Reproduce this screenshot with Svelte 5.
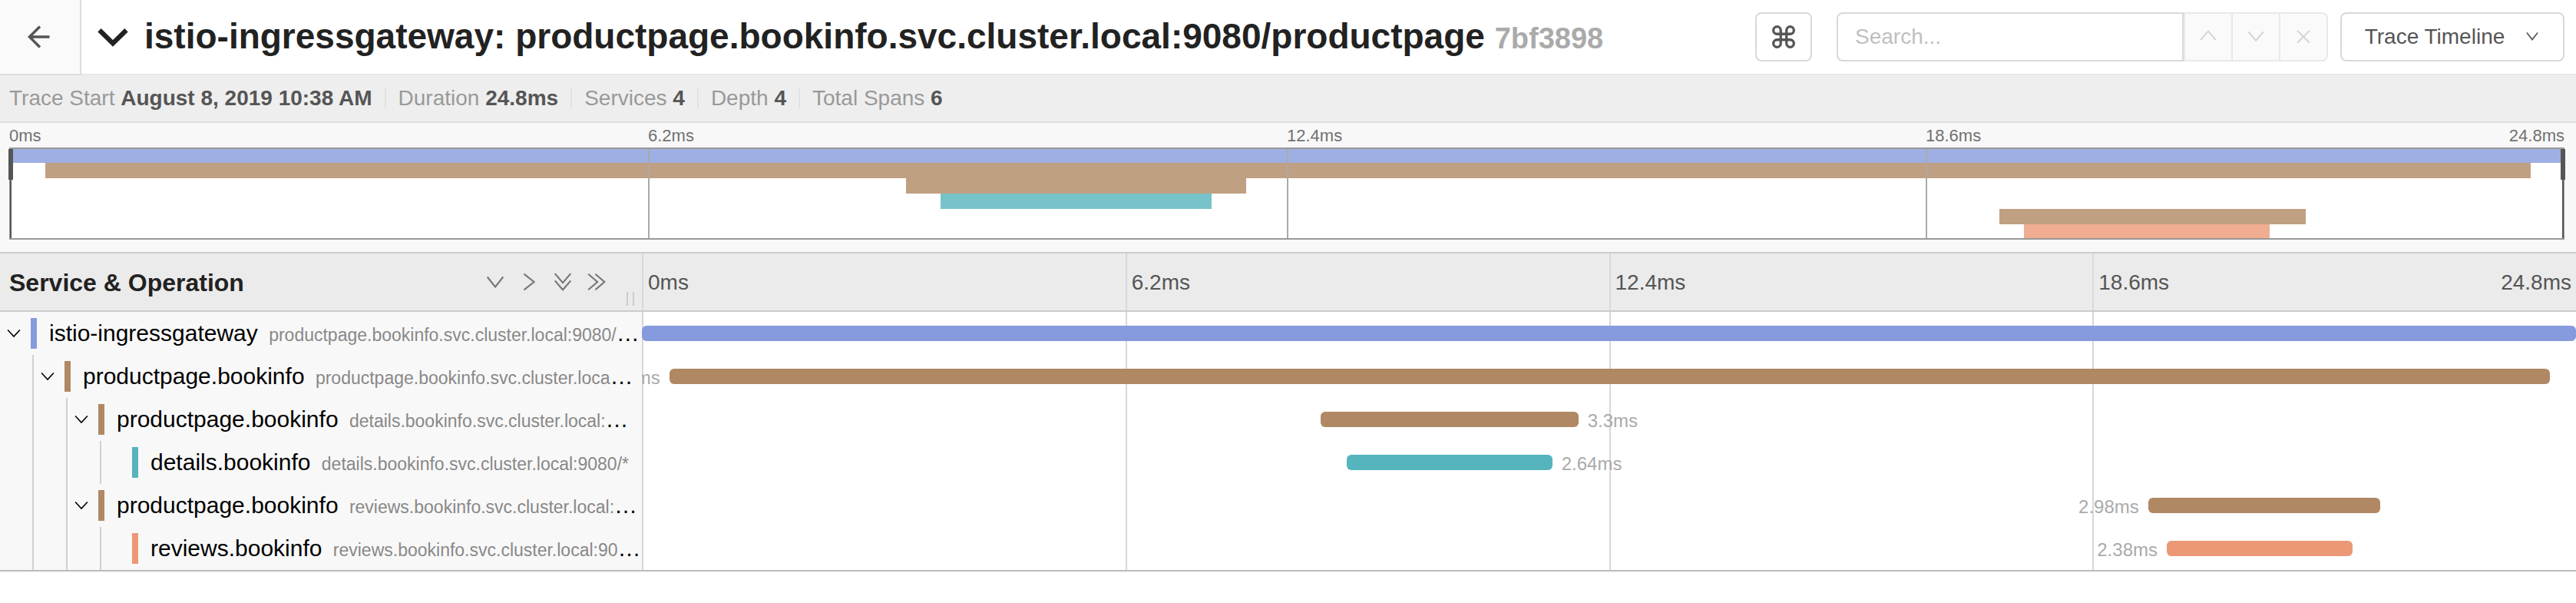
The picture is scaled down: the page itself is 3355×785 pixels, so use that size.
<script>
  const ticks = ['0ms', '6.2ms', '12.4ms', '18.6ms', '24.8ms'];

  const colors = { istio: '#869bdd', product: '#b08863', details: '#55b4bc', reviews: '#ec9876' };

  const summary = [
    ['Trace Start', 'August 8, 2019 10:38 AM'],
    ['Duration', '24.8ms'],
    ['Services', '4'],
    ['Depth', '4'],
    ['Total Spans', '6']
  ];

  // `more` marks an operation name that is shortened in the list.
  const spans = [
    { depth: 0, open: true, color: colors.istio, service: 'istio-ingressgateway', op: 'productpage.bookinfo.svc.cluster.local:9080/', more: true, left: 0, width: 100, label: '', side: 'right' },
    { depth: 1, open: true, color: colors.product, service: 'productpage.bookinfo', op: 'productpage.bookinfo.svc.cluster.loca', more: true, left: 1.42, width: 97.25, label: '24.11ms', side: 'left' },
    { depth: 2, open: true, color: colors.product, service: 'productpage.bookinfo', op: 'details.bookinfo.svc.cluster.local:', more: true, left: 35.09, width: 13.33, label: '3.3ms', side: 'right' },
    { depth: 3, open: false, color: colors.details, service: 'details.bookinfo', op: 'details.bookinfo.svc.cluster.local:9080/*', more: false, left: 36.44, width: 10.63, label: '2.64ms', side: 'right' },
    { depth: 2, open: true, color: colors.product, service: 'productpage.bookinfo', op: 'reviews.bookinfo.svc.cluster.local:', more: true, left: 77.88, width: 12, label: '2.98ms', side: 'left' },
    { depth: 3, open: false, color: colors.reviews, service: 'reviews.bookinfo', op: 'reviews.bookinfo.svc.cluster.local:90', more: true, left: 78.84, width: 9.61, label: '2.38ms', side: 'left' }
  ];
</script>

{#snippet icon(d, size, stroke)}
  <svg width={size} height={size} viewBox="0 0 24 24" fill="none" stroke="currentColor" stroke-width={stroke} aria-hidden="true"><path {d} /></svg>
{/snippet}

<header class="top">
  <a class="back" href="#search" aria-label="Back to search">{@render icon('M21.400 12H2M12 1.800L1.800 12L12 22.200', 32, 2.6)}</a>
  <button class="title" type="button">
    {@render icon('M2 7L12 16.800L22 7', 42, 3.6)}
    <h1>istio-ingressgateway: productpage.bookinfo.svc.cluster.local:9080/productpage <small>7bf3898</small></h1>
  </button>
  <button class="box keys" type="button" aria-label="Keyboard shortcuts">
    {@render icon('M9.500 9.500H14.500V14.500H9.500ZM9.500 9.500H6.300A3.200 3.200 0 1 1 9.500 6.300ZM14.500 9.500V6.300A3.200 3.200 0 1 1 17.700 9.500ZM14.500 14.500H17.700A3.200 3.200 0 1 1 14.500 17.700ZM9.500 14.500V17.700A3.200 3.200 0 1 1 6.300 14.500Z', 36, 2.2)}
  </button>
  <div class="search">
    <input type="text" placeholder="Search..." aria-label="Search" />
    <button type="button" disabled aria-label="Previous result">{@render icon('M3.500 15.300L12 5.700L20.500 15.300', 28, 1.7)}</button>
    <button type="button" disabled aria-label="Next result">{@render icon('M3.500 6.300L12 16L20.500 6.300', 28, 1.7)}</button>
    <button type="button" disabled aria-label="Clear search">{@render icon('M5.200 5L18.800 18.600M18.800 5L5.200 18.600', 28, 1.7)}</button>
  </div>
  <button class="box view" type="button">Trace Timeline {@render icon('M3.500 5.500L12 16.300L20.500 5.500', 20, 2)}</button>
</header>

<ul class="summary">
  {#each summary as [name, value]}
    <li>{name} <strong>{value}</strong></li>
  {/each}
</ul>

<section class="minimap">
  <div class="labels">
    {#each ticks as t}<span>{t}</span>{/each}
  </div>
  <div class="graph">
    {#each spans as s}
      <div class="mini" style="margin-left:{s.left}%;width:{s.width}%;background:{s.color}"></div>
    {/each}
    {#each [25, 50, 75] as t}<i class="tick" style="left:{t}%"></i>{/each}
    <i class="frame"></i>
    <i class="scrub start"></i>
    <i class="scrub end"></i>
  </div>
</section>

<div class="row head">
  <div class="name">
    <h2>Service &amp; Operation</h2>
    <div class="tools">
      <button type="button" aria-label="Expand one level">{@render icon('M2.500 6L12 18L21.500 6', 26, 2)}</button>
      <button type="button" aria-label="Collapse one level">{@render icon('M6 2.500L18 12L6 21.500', 26, 2)}</button>
      <button type="button" aria-label="Expand all">{@render icon('M2.500 2L12 13L21.500 2M2.500 10.500L12 21.500L21.500 10.500', 26, 2)}</button>
      <button type="button" aria-label="Collapse all">{@render icon('M2 2.500L13 12L2 21.500M10.500 2.500L21.500 12L10.500 21.500', 26, 2)}</button>
    </div>
    <i class="grip"></i>
  </div>
  <div class="times">
    {#each ticks as t}<span>{t}</span>{/each}
  </div>
</div>

<main>
  {#each spans as s}
    <div class="row">
      <div class="name">
        {#each Array(s.depth) as _}<i class="guide"></i>{/each}
        <span class="toggle">
          {#if s.open}<button type="button" aria-label="Toggle {s.service}">{@render icon('M2.500 6.500L12 16.800L21.500 6.500', 20, 1.9)}</button>{/if}
        </span>
        <div class="text" style="border-color:{s.color}"><span>{s.service}</span> <small>{s.op}</small>{#if s.more}…{/if}</div>
      </div>
      <div class="lane">
        <i class="line"></i><i class="line"></i><i class="line"></i><i class="line"></i>
        <div class="bar" style="left:{s.left}%;width:{s.width}%;background:{s.color}">
          {#if s.label}<span class={s.side}>{s.label}</span>{/if}
        </div>
      </div>
    </div>
  {/each}
</main>

<style>
  :global(body) { background: #fff; font-family: "Liberation Sans", Arial, sans-serif; color: #000; }
  :global(*) { box-sizing: border-box; }
  button { font: inherit; color: inherit; background: none; border: 0; padding: 0; cursor: pointer; }
  svg { display: block; flex: none; }

  .top { display: flex; align-items: center; height: 98px; padding-right: 15px; border-bottom: 2px solid #e6e6e6; }
  .back { align-self: stretch; display: flex; align-items: center; justify-content: center; width: 106px; margin-bottom: -2px; background: #fafafa; border-right: 2px solid #ddd; border-bottom: 2px solid #ddd; color: #555; }
  .title { flex: 1; min-width: 0; display: flex; align-items: center; gap: 20px; padding-left: 20px; color: #222; text-align: left; }
  h1 { margin: 0; font-size: 46px; line-height: 60px; font-weight: 700; white-space: nowrap; overflow: hidden; text-overflow: ellipsis; }
  h1 small { font-size: 38px; color: #aaa; }
  .box { height: 64px; border: 2px solid #d9d9d9; border-radius: 8px; color: #555; display: flex; align-items: center; justify-content: center; }
  .keys { width: 74px; margin-right: 32px; }
  .search { display: flex; margin-right: 16px; color: #d4d4d4; }
  .search input { width: 452px; height: 64px; padding: 0 22px; border: 2px solid #d9d9d9; border-radius: 8px 0 0 8px; font: 28px "Liberation Sans", Arial, sans-serif; }
  .search input::placeholder { color: #bfbfbf; }
  .search button { width: 62px; height: 64px; border: 2px solid #e8e8e8; border-left: 0; background: #fafafa; display: flex; align-items: center; justify-content: center; }
  .search input + button { width: 64px; border-left: 2px solid #e8e8e8; }
  .search button:last-child { border-radius: 0 8px 8px 0; }
  .view { width: 292px; gap: 26px; font-size: 28px; }

  .summary { display: flex; align-items: center; height: 62px; margin: 0; padding: 0 12px; list-style: none; background: #eee; border-bottom: 2px solid #e0e0e0; font-size: 28px; color: #999; }
  .summary li { line-height: 26px; }
  .summary li + li { margin-left: 16px; padding-left: 16px; border-left: 2px solid #e2e2e2; }
  .summary strong { color: #555; }

  .minimap { padding: 0 15px 16px 12px; background: #f8f8f8; border-bottom: 2px solid #ccc; }
  .labels { display: grid; grid-template-columns: repeat(4, 1fr) 0; height: 32px; line-height: 34px; font-size: 22px; color: #717171; }
  .labels span:last-child, .times span:last-child { justify-self: end; }
  .graph { position: relative; height: 120px; background: #fff; display: flex; flex-direction: column; }
  .mini { flex: 1; opacity: .8; }
  .tick { position: absolute; top: 0; bottom: 0; width: 2px; background: #aaa; }
  .frame { position: absolute; inset: 0; border: 2px solid #999; }
  .scrub { position: absolute; top: 2px; height: 40px; width: 6px; background: #555; }
  .scrub::after { content: ""; position: absolute; top: 0; left: 2px; width: 2px; height: 116px; background: #555; }
  .start { left: -1px; }
  .end { right: -1px; }

  .row { display: grid; grid-template-columns: 836px 1fr; height: 56px; }
  .head { height: 76px; background: #ebebeb; border-bottom: 2px solid #ccc; }
  .name { position: relative; display: flex; align-items: center; min-width: 0; background: #f8f8f8; }
  .head .name { background: none; justify-content: space-between; padding: 0 46px 0 12px; }
  h2 { margin: 0; padding-top: 2px; font-size: 32px; line-height: 40px; color: #222; }
  .tools { display: flex; gap: 18px; color: #777; }
  .grip { position: absolute; right: 10px; bottom: 6px; width: 10px; height: 18px; border: 2px solid #ccc; border-width: 0 2px; }
  .times { display: grid; grid-template-columns: repeat(4, 1fr) 0; align-items: center; font-size: 28px; color: #555; }
  .times span { display: flex; align-items: center; height: 100%; padding: 2px 0 0 6px; border-left: 2px solid #d8d8d8; }
  .times span:last-child { border: 0; padding-right: 6px; }

  main { border-bottom: 2px solid #bbb; }
  .guide { flex: none; align-self: stretch; width: 44px; border-right: 2px solid #d0d0d0; }
  .toggle { flex: none; width: 40px; display: flex; justify-content: center; padding-right: 4px; }
  .text { flex: none; height: 40px; padding-left: 16px; border-left: 8px solid; font-size: 30px; line-height: 40px; white-space: nowrap; }
  .text small { margin-left: 6px; font-size: 23px; color: #888; }
  .lane { position: relative; display: grid; grid-template-columns: repeat(4, 1fr); overflow: hidden; }
  .line { border-left: 2px solid #d8d8d8; }
  .bar { position: absolute; top: 18px; height: 20px; border-radius: 6px; }
  .bar span { position: absolute; top: 0; line-height: 24px; font-size: 24px; color: #aaa; white-space: nowrap; }
  .bar .right { left: 100%; padding-left: 12px; }
  .bar .left { right: 100%; padding-right: 12px; }
</style>
